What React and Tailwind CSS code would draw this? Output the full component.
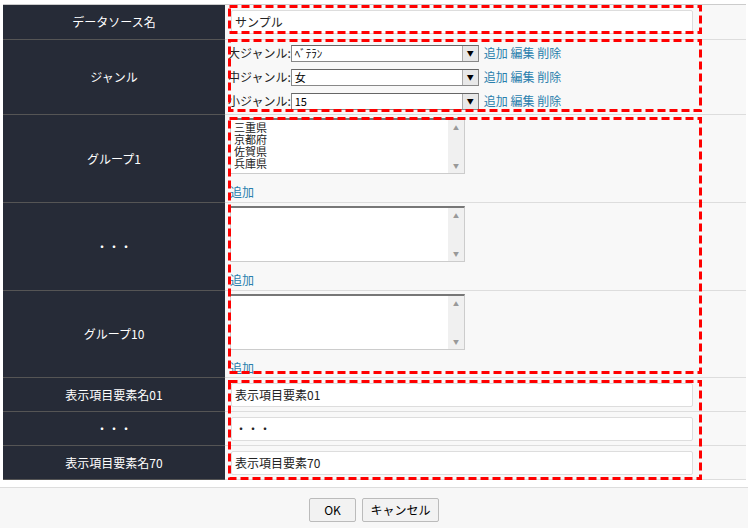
const F = { fontFamily: '"Noto Sans CJK JP", "Liberation Sans", sans-serif' };

function Label({ children, h }) {
  return (
    <div className={`w-[222px] bg-[#262b37] text-white text-[12px] flex items-center justify-center border-b border-[#555]`} style={{ height: h }}>
      {children}
    </div>
  );
}
function Cell({ children, h, cls = "" }) {
  return (
    <div className={`flex-1 bg-[#f8f8f8] border-b border-[#ddd] ${cls}`} style={{ height: h }}>
      {children}
    </div>
  );
}
function Input({ v }) {
  return (
    <div className="ml-[6px] w-[462px] h-[24px] bg-white border border-[#ddd] rounded-[2px] text-[12px] leading-[22px] px-[3px] text-[#222]">{v}</div>
  );
}
function Sel({ label, v }) {
  return (
    <div className="flex items-center h-[24px] text-[12px]">
      <span className="text-[#222]">{label}</span>
      <div className="w-[188px] h-[17px] bg-white border border-[#888] border-t-[#666] flex items-center text-[11px] pl-[3px] relative">
        {v}
        <div className="absolute right-0 top-0 w-[16px] h-[15px] bg-[#e8e8e8] border-l border-[#aaa] flex items-center justify-center text-[7px]">▼</div>
      </div>
      <span className="ml-[5px] text-[#2a7fad]">追加 編集 削除</span>
    </div>
  );
}
function TA({ items = [] }) {
  return (
    <div className="w-[235px] h-[56px] bg-white border border-[#ccc] border-t-2 border-t-[#777] flex">
      <div className="flex-1 text-[11px] px-[3px] pt-[1px] text-[#222]">
        {items.map((i) => <div key={i} className="h-[12px] leading-[12px] overflow-hidden">{i}</div>)}
      </div>
      <div className="w-[16px] bg-[#f0f0f0] flex flex-col justify-between items-center text-[6px] text-[#999] py-[3px]">
        <span>▲</span><span>▼</span>
      </div>
    </div>
  );
}
function Group({ items }) {
  return (
    <div className="pl-[5px] pt-[3px]">
      <TA items={items} />
      <div className="text-[12px] text-[#2a7fad] mt-[9px]">追加</div>
    </div>
  );
}
function Dash({ x, y, w, h }) {
  return (
    <svg className="absolute" style={{ left: x, top: y }} width={w} height={h}>
      <rect x="1.5" y="1.5" width={w - 3} height={h - 3} fill="none" stroke="#f00" strokeWidth="3" strokeDasharray="8 4" />
    </svg>
  );
}

export default function App() {
  const rows = [
    ["データソース名", 35, <div className="pt-[5px]"><Input v="サンプル" /></div>],
    ["ジャンル", 75, <div className="pl-[3px] pt-[1px]"><Sel label="大ジャンル:" v="ﾍﾞﾃﾗﾝ" /><Sel label="中ジャンル:" v="女" /><Sel label="小ジャンル:" v="15" /></div>],
    ["グループ1", 88, <Group items={["三重県", "京都府", "佐賀県", "兵庫県"]} />],
    ["・・・", 88, <Group />],
    ["グループ10", 87, <Group />],
    ["表示項目要素名01", 34, <div className="pt-[5px]"><Input v="表示項目要素01" /></div>],
    ["・・・", 34, <div className="pt-[5px]"><Input v="・・・" /></div>],
    ["表示項目要素名70", 34, <div className="pt-[5px]"><Input v="表示項目要素70" /></div>],
  ];
  return (
    <div className="w-[748px] h-[528px] bg-white relative overflow-hidden" style={F}>
      <div className="pt-[4px] px-[3px] pr-[2px]">
        <div className="border-t border-[#ccc]">
          {rows.map(([l, h, c], i) => (
            <div key={i} className="flex">
              <Label h={h}>{l}</Label>
              <Cell h={h}>{c}</Cell>
            </div>
          ))}
        </div>
      </div>
      <div className="absolute left-0 right-0 top-[487px] bottom-0 bg-[#f7f7f7] border-t border-[#ddd] flex justify-center gap-[6px] pt-[10px]">
        <button className="w-[47px] h-[24px] bg-[#f2f2f2] border border-[#bbb] rounded-[2px] text-[12px]">OK</button>
        <button className="w-[77px] h-[24px] bg-[#f2f2f2] border border-[#bbb] rounded-[2px] text-[12px]">キャンセル</button>
      </div>
      <Dash x={228} y={5} w={474} h={29} />
      <Dash x={228} y={39} w={474} h={73} />
      <Dash x={228} y={117} w={474} h={257} />
      <Dash x={228} y={380} w={474} h={100} />
    </div>
  );
}
